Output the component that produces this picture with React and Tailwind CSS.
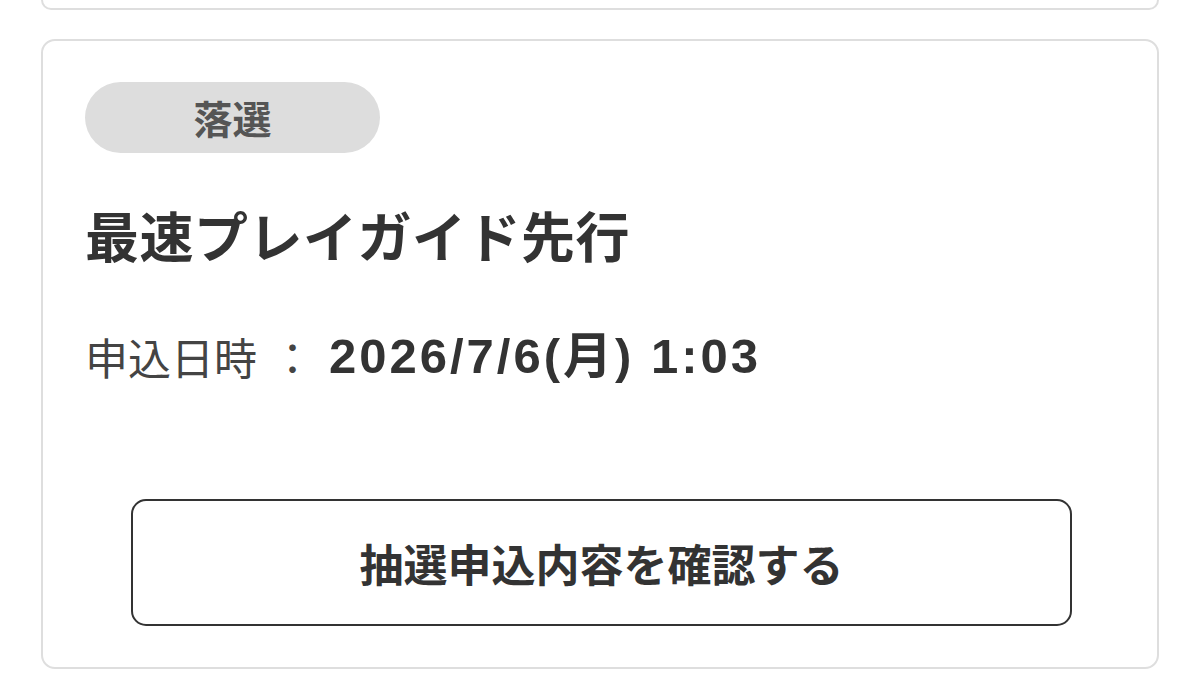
export default function App() {
    return (
        <div
            className="min-h-[697px] bg-white px-[41px] text-[#333]"
            style={{ fontFamily: '"Noto Sans CJK JP", "Noto Sans", sans-serif' }}
        >
            {/* tail of the previous entry */}
            <div className="h-[10px] rounded-b-[14px] border-2 border-t-0 border-[#dedede]" />

            <div className="mt-[29px] rounded-[14px] border-2 border-[#dedede] px-[42px] pt-[41px] pb-[41px]">
                <div className="flex h-[71px] w-[295px] items-center justify-center rounded-full bg-[#dddddd] text-[39px] font-bold leading-none text-[#555]">
                    落選
                </div>

                <h2 className="mt-[55px] text-[54px] font-bold leading-none tracking-[0.5px]">最速プレイガイド先行</h2>

                <div className="mt-[70px] flex items-center leading-none">
                    <span className="text-[43px] text-[#444]">申込日時</span>
                    <span className="ml-[14px] text-[43px] text-[#444]">：</span>
                    <span
                        className="ml-[15px] text-[49px] font-bold tracking-[3px]"
                        style={{ fontFamily: '"Liberation Sans", "Noto Sans CJK JP", sans-serif' }}
                    >
                        2026/7/6(月) 1:03
                    </span>
                </div>

                <button className="mx-[46px] mt-[118px] flex h-[127px] w-[941px] items-center justify-center rounded-[15px] border-2 border-[#333] bg-white text-[44px] font-bold leading-none text-[#333]">
                    抽選申込内容を確認する
                </button>
            </div>
        </div>
    );
}
